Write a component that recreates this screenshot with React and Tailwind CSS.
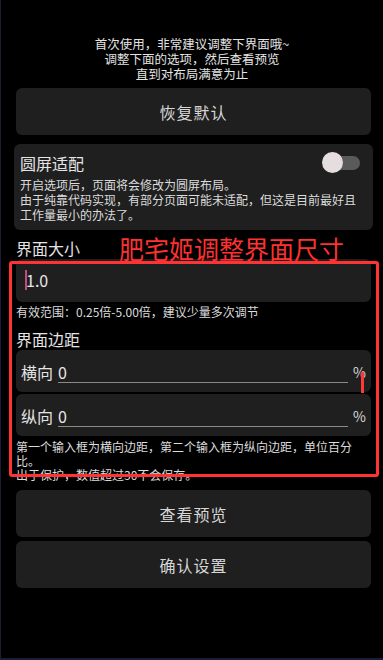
import React from 'react';

const font = "font-['Noto_Sans_CJK_SC','Noto_Sans',sans-serif]";

const Button = ({ label, className = '' }) => (
  <div className={`h-[47px] rounded-[6px] bg-[#1f1f1f] flex items-center justify-center text-[16px] tracking-[1px] text-[#d6d6d6] ${className}`}>
    {label}
  </div>
);

const MarginInput = ({ label, className = '' }) => (
  <div className={`h-[42px] rounded-[6px] bg-[#1f1f1f] flex items-start pt-[11px] pl-[5px] pr-[5px] ${className}`}>
    <span className="text-[16px] leading-[22px] text-[#e4e4e4]">{label}</span>
    <div className="flex-1 ml-[5px] h-[22px] leading-[22px] border-b border-[#8a8a8a] text-[16px] text-[#e8e8e8]">0</div>
    <span className="ml-[5px] text-[14px] leading-[22px] text-[#d8d8d8]">%</span>
  </div>
);

const App = () => {
  return (
    <div className={`relative w-[383px] h-[660px] bg-black border-l border-b-2 border-[#1c1c38] overflow-hidden ${font}`}>
      <div className="pt-[36px] text-center text-[12.5px] leading-[15px] text-[#e4e4e4]">
        <p>首次使用，非常建议调整下界面哦~</p>
        <p>调整下面的选项，然后查看预览</p>
        <p>直到对布局满意为止</p>
      </div>

      <div className="pl-[15px] pr-[12px]">
        <Button label="恢复默认" className="mt-[7px]" />

        <div className="-mx-[2px] mt-[9px] rounded-[6px] bg-[#1f1f1f] pt-[8px] pl-[6px] pr-[13px] pb-[8px]">
          <div className="flex items-center justify-between h-[22px]">
            <span className="text-[16px] leading-[22px] text-[#e4e4e4]">圆屏适配</span>
            <div className="relative w-[38px] h-[22px]">
              <div className="absolute right-0 top-[4px] w-[30px] h-[14px] rounded-full bg-[#5a5a5a]" />
              <div className="absolute left-0 top-0 w-[21px] h-[21px] rounded-full bg-[#e6dede]" />
            </div>
          </div>
          <p className="mt-[3px] text-[12px] leading-[15px] text-[#dcdcdc]">
            开启选项后，页面将会修改为圆屏布局。<br />
            由于纯靠代码实现，有部分页面可能未适配，但这是目前最好且工作量最小的办法了。
          </p>
        </div>

        <p className="mt-[7px] text-[16px] leading-[22px] text-[#e4e4e4]">界面大小</p>
        <div className="h-[43px] rounded-[6px] bg-[#1f1f1f] flex items-center pl-[9px] pb-[1px]">
          <span className="w-[2px] h-[20px] bg-[#c8497a]" />
          <span className="-ml-[1px] text-[16px] text-[#e8e8e8]">1.0</span>
        </div>
        <p className="mt-[2px] text-[12px] leading-[16px] text-[#dcdcdc]">有效范围：0.25倍-5.00倍，建议少量多次调节</p>

        <p className="mt-[8px] text-[16px] leading-[22px] text-[#e4e4e4]">界面边距</p>
        <MarginInput label="横向" />
        <MarginInput label="纵向" className="mt-[2px]" />

        <p className="mt-[4px] text-[12px] leading-[14px] text-[#dcdcdc]">
          第一个输入框为横向边距，第二个输入框为纵向边距，单位百分比。<br />
          出于保护，数值超过30不会保存。
        </p>

        <Button label="查看预览" className="mt-[8px]" />
        <Button label="确认设置" className="mt-[4px]" />
      </div>

      {/* annotation overlay */}
      <div className="absolute left-[118px] top-[233px] text-[25px] leading-[30px] text-[#ff3030]">肥宅姬调整界面尺寸</div>
      <div className="absolute left-[8px] top-[261px] w-[370px] h-[216px] border-[3px] border-[#ff3333] rounded-[3px]" />
      <div className="absolute left-[360px] top-[372px] w-[3px] h-[21px] bg-[#ff3838]" />
    </div>
  );
};

export default App;
